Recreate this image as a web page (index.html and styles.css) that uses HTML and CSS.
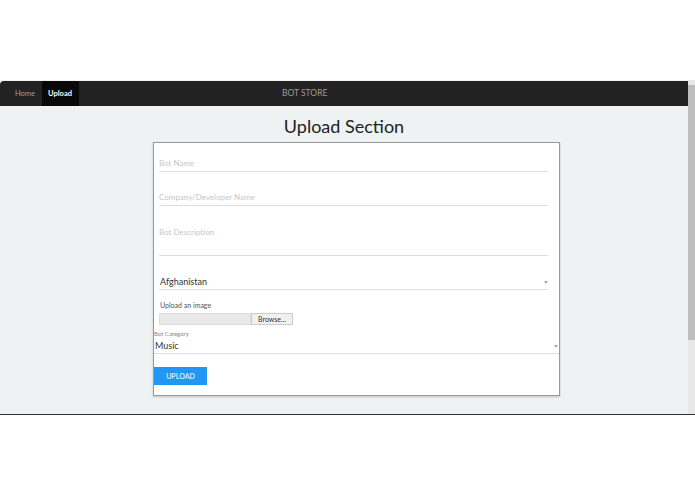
FILE: index.html
```html
<!DOCTYPE html>
<html lang="en">
<head>
    <meta charset="UTF-8">
    <meta name="viewport" content="width=device-width, initial-scale=1.0">
    <title>Bot Store - Upload</title>
    <link rel="stylesheet" href="styles.css">
</head>
<body>
    <div class="frame">
        <div class="viewport">
            <nav class="navbar">
                <a class="nav-item" href="#">Home</a>
                <a class="nav-item active" href="#">Upload</a>
                <span class="brand">BOT STORE</span>
            </nav>

            <div class="content">
                <h1 class="title">Upload Section</h1>

                <form class="card" id="upload-form">
                    <input class="field first" type="text" placeholder="Bot Name">
                    <input class="field" type="text" placeholder="Company/Developer Name">
                    <textarea class="field area" placeholder="Bot Description"></textarea>

                    <div class="select-wrap">
                        <select class="field select">
                            <option>Afghanistan</option>
                            <option>Albania</option>
                            <option>Algeria</option>
                        </select>
                    </div>

                    <label class="small-label">Upload an image</label>
                    <div class="file-input">
                        <span class="file-name"></span>
                        <span class="file-btn">Browse...</span>
                    </div>

                    <label class="tiny-label">Bot Category</label>
                    <div class="select-wrap wide">
                        <select class="field select">
                            <option>Music</option>
                            <option>Games</option>
                            <option>News</option>
                        </select>
                    </div>

                    <button class="upload-btn" type="submit">UPLOAD</button>
                </form>
            </div>
        </div>

        <div class="scrollbar">
            <div class="thumb"></div>
        </div>
    </div>
</body>
</html>
```

FILE: styles.css
```css
body {
    margin: 0;
    background-color: #fff;
    font-family: Lato, "Open Sans", sans-serif;
}
.frame {
    margin-top: 80px;
    height: 334px;
    display: flex;
    border-bottom: 1px solid #333;
}
.viewport {
    flex: 1;
    display: flex;
    flex-direction: column;
    background-color: #eff2f3;
}
.navbar {
    height: 25px;
    margin-top: 1px;
    display: flex;
    align-items: stretch;
    background-color: #222;
    border-radius: 4px 0 0 0;
    padding-left: 8px;
    position: relative;
}
.nav-item {
    display: flex;
    align-items: center;
    padding: 0 7px;
    font-size: 7.5px;
    color: #9d9d9d;
    text-decoration: none;
}
.nav-item.active {
    background-color: #080808;
    color: #fff;
    font-weight: bold;
    padding: 0 7px 0 6px;
}
.brand {
    position: absolute;
    left: 282px;
    top: 0;
    line-height: 25px;
    font-size: 8.5px;
    color: #9d9d9d;
}
.content {
    flex: 1;
}
.title {
    margin: 8px 0 0;
    text-align: center;
    font-weight: normal;
    font-size: 18px;
    line-height: 25px;
    color: #222;
}
.card {
    width: 405px;
    margin: 3px 0 0 153px;
    background-color: #fff;
    border: 1px solid #999;
    box-shadow: 0 1px 2px rgba(0, 0, 0, 0.2);
    padding: 0 0 10px;
    display: flex;
    flex-direction: column;
}
.field {
    display: block;
    box-sizing: border-box;
    width: 389px;
    margin: 17px 0 0 5px;
    height: 17px;
    padding: 0;
    border: none;
    border-bottom: 1px solid #ddd;
    outline: none;
    background: transparent;
    font-family: inherit;
    font-size: 8px;
    color: #333;
}
.field.first {
    margin-top: 12px;
}
.field::placeholder {
    color: #c6c6c6;
}
.area {
    height: 33px;
    padding-top: 4px;
    resize: none;
}
.select-wrap {
    position: relative;
}
.select-wrap::after {
    content: "";
    position: absolute;
    right: 11px;
    bottom: 6px;
    border-left: 2px solid transparent;
    border-right: 2px solid transparent;
    border-top: 3px solid #aaa;
}
.select {
    -webkit-appearance: none;
    appearance: none;
    font-size: 9px;
    padding-left: 1px;
}
.small-label {
    margin: 10px 0 0 6px;
    font-size: 7px;
    line-height: 10px;
    color: #555;
}
.file-input {
    display: flex;
    margin: 3px 0 0 5px;
    height: 12px;
}
.file-name {
    width: 90px;
    background-color: #e9e9e9;
    border: 1px solid #ddd;
}
.file-btn {
    width: 40px;
    background-color: #f0f0f0;
    border: 1px solid #ccc;
    font-size: 7px;
    line-height: 10px;
    text-align: center;
    color: #333;
}
.tiny-label {
    margin: 5px 0 0 0;
    font-size: 6px;
    line-height: 8px;
    color: #888;
}
.select-wrap.wide::after {
    right: 1px;
}
.select-wrap.wide .field {
    width: 405px;
    margin: 0;
    height: 16px;
}
.upload-btn {
    width: 53px;
    height: 18px;
    margin-top: 13px;
    padding: 0;
    border: none;
    background-color: #2196f3;
    color: #d8ecfc;
    font-family: inherit;
    font-size: 7px;
    font-weight: bold;
    cursor: pointer;
}
.scrollbar {
    width: 7px;
    background-color: #e8e8e8;
    padding-top: 5px;
}
.thumb {
    height: 255px;
    background-color: #bdbdbd;
}
```
